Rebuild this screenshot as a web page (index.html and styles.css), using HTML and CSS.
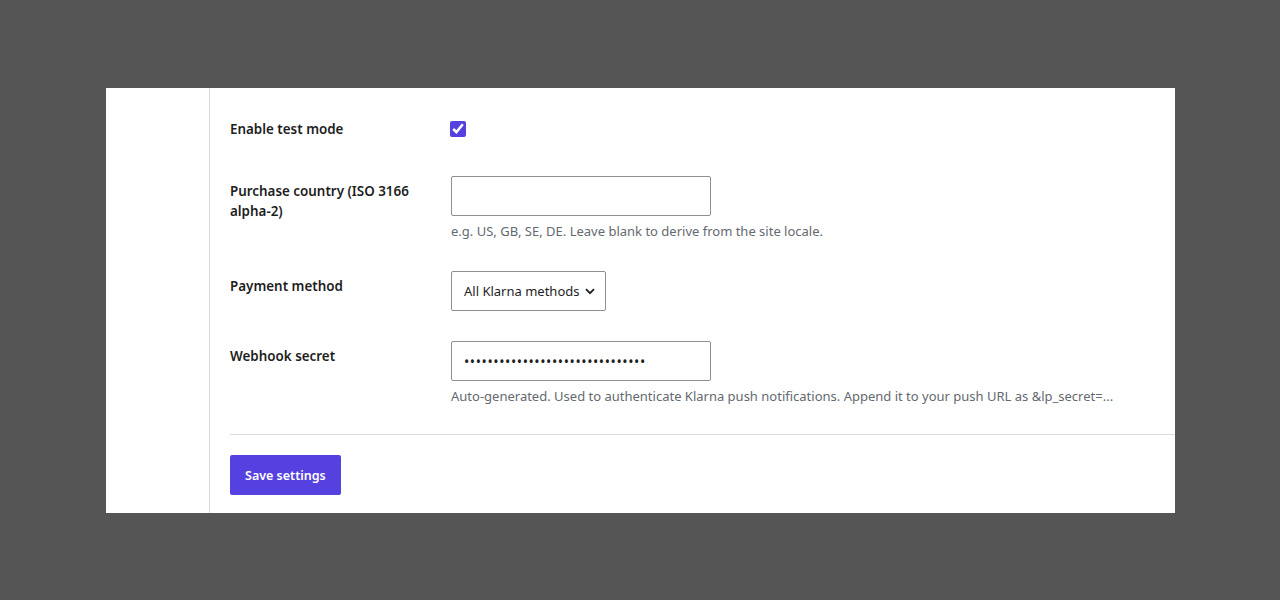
FILE: index.html
```html
<!DOCTYPE html>
<html lang="en">
<head>
  <meta charset="UTF-8">
  <title>Klarna Settings</title>
  <link rel="stylesheet" href="styles.css">
</head>

<body>
  <div class="panel">
    <div class="sidebar"></div>

    <form class="settings">
      <div class="row">
        <label class="label" for="testmode">Enable test mode</label>
        <div class="field check-field">
          <input type="checkbox" id="testmode" name="testmode" checked>
        </div>
      </div>

      <div class="row">
        <label class="label" for="country">Purchase country (ISO 3166 alpha-2)</label>
        <div class="field">
          <input type="text" id="country" name="country" class="text-input">
          <p class="help">e.g. US, GB, SE, DE. Leave blank to derive from the site locale.</p>
        </div>
      </div>

      <div class="row">
        <label class="label" for="method">Payment method</label>
        <div class="field">
          <div class="select-wrap">
            <select id="method" name="method">
              <option>All Klarna methods</option>
              <option>Pay later</option>
              <option>Pay now</option>
              <option>Financing</option>
            </select>
            <svg class="chevron" width="10" height="7" viewBox="0 0 10 7"><path d="M1 1.2l4 4 4-4" fill="none" stroke="#1e1e1e" stroke-width="1.8"/></svg>
          </div>
        </div>
      </div>

      <div class="row">
        <label class="label" for="secret">Webhook secret</label>
        <div class="field">
          <input type="password" id="secret" name="secret" class="text-input secret" value="a8f3k2m9x7q1w4e6r5t0y2u8i3o9p1z">
          <p class="help">Auto-generated. Used to authenticate Klarna push notifications. Append it to your push URL as &amp;lp_secret=...</p>
        </div>
      </div>

      <div class="actions">
        <button type="submit" class="save-btn">Save settings</button>
      </div>
    </form>
  </div>
</body>
</html>
```

FILE: styles.css
```css
* {
  box-sizing: border-box;
}
body {
  margin: 0;
  padding: 0;
  background: #555555;
  font-family: 'Noto Sans', 'Open Sans', sans-serif;
  color: #1e1e1e;
}
.panel {
  display: flex;
  width: 1069px;
  margin: 88px 0 0 106px;
  background: #fff;
}
.sidebar {
  width: 104px;
  flex-shrink: 0;
  border-right: 1px solid #dcdcde;
}
.settings {
  flex: 1;
  padding: 11px 0 18px 20px;
}
.row {
  display: grid;
  grid-template-columns: 221px 260px;
  padding: 15px 0;
}
.label {
  padding-top: 5px;
  font-size: 13.4px;
  font-weight: 600;
  line-height: 20px;
  padding-right: 20px;
}
.check-field {
  height: 32px;
  padding-top: 6px;
}
.check-field input {
  width: 16px;
  height: 16px;
  margin: 0 0 0 -1px;
  accent-color: #5541e0;
}
.text-input {
  width: 260px;
  height: 40px;
  padding: 0 12px;
  border: 1px solid #8c8f94;
  border-radius: 2px;
  font-family: inherit;
  font-size: 14px;
  color: #1e1e1e;
  outline: none;
}
.secret {
  letter-spacing: 0.6px;
}
.help {
  margin: 6px 0 0;
  font-size: 13px;
  line-height: 19px;
  color: #646970;
  white-space: nowrap;
}
.select-wrap {
  position: relative;
  display: inline-block;
}
select {
  appearance: none;
  height: 40px;
  width: 155px;
  padding: 0 20px 0 12px;
  border: 1px solid #8c8f94;
  border-radius: 2px;
  background: #fff;
  font-family: inherit;
  font-size: 13px;
  color: #1e1e1e;
}
.chevron {
  position: absolute;
  right: 11px;
  top: 17px;
  pointer-events: none;
}
.actions {
  margin-top: 13px;
  border-top: 1px solid #dcdcde;
  padding-top: 20px;
}
.save-btn {
  background-color: #5541e0;
  color: #fff;
  border: none;
  border-radius: 2px;
  height: 40px;
  padding: 0 15px;
  font-family: inherit;
  font-size: 12.5px;
  font-weight: 600;
  cursor: pointer;
}
.save-btn:hover {
  background-color: #4533c9;
}
```
